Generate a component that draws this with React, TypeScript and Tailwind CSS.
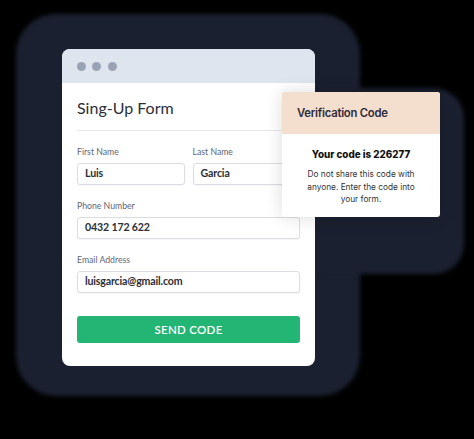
import React from "react";

const formFont = { fontFamily: "Lato, 'Open Sans', sans-serif" } as React.CSSProperties;
const popFont = { fontFamily: "Inter, 'Open Sans', sans-serif" } as React.CSSProperties;

function Field({ label, value }: { label: string; value: string }) {
  return (
    <div className="flex flex-col gap-[5px] min-w-0">
      <div className="text-[8.7px] leading-[12px] text-[#5f6673]">{label}</div>
      <div className="h-[22px] rounded-[3px] border border-[#dadde2] bg-white pl-[7px] flex items-center text-[10.6px] font-bold tracking-[-0.15px] text-[#2b2f38] shadow-[0_1px_1px_rgba(0,0,0,0.04)]">
        {value}
      </div>
    </div>
  );
}

export default function App() {
  return (
    <div className="relative w-[474px] h-[439px] bg-black overflow-hidden" style={formFont}>
      <div className="absolute left-[16px] top-[14px] w-[344px] h-[382px] rounded-[40px] bg-[#1b2030] blur-[2px]" />
      <div className="absolute left-[290px] top-[88px] w-[174px] h-[186px] rounded-[30px] bg-[#1b2030] blur-[2px]" />

      <div className="relative pl-[62px] pt-[49px]">
        <div className="w-[253px] rounded-[8px] bg-white overflow-hidden">
          <div className="h-[34px] bg-[#dfe5ee] flex items-center gap-[6.5px] pl-[14.5px]">
            <span className="w-[9px] h-[9px] rounded-full bg-[#9aa3b4]" />
            <span className="w-[9px] h-[9px] rounded-full bg-[#9aa3b4]" />
            <span className="w-[9px] h-[9px] rounded-full bg-[#9aa3b4]" />
          </div>
          <div className="px-[15px] pt-[15px] pb-[23px] flex flex-col">
            <div className="text-[16px] leading-[20px] text-[#2b2f38]">Sing-Up Form</div>
            <div className="mt-[12px] h-px bg-[#e6e8ec]" />
            <div className="mt-[15px] grid grid-cols-2 gap-[8px]">
              <Field label="First Name" value="Luis" />
              <Field label="Last Name" value="Garcia" />
            </div>
            <div className="mt-[15px]">
              <Field label="Phone Number" value="0432 172 622" />
            </div>
            <div className="mt-[15px]">
              <Field label="Email Address" value="luisgarcia@gmail.com" />
            </div>
            <div className="mt-[23px] h-[27px] rounded-[3px] bg-[#22b573] flex items-center justify-center text-white text-[11.5px] font-semibold tracking-[0.3px]">
              SEND CODE
            </div>
          </div>
        </div>
      </div>

      <div
        className="absolute left-[282px] top-[92px] w-[158px] h-[125px] rounded-[3px] bg-white overflow-hidden shadow-[0_0_18px_rgba(0,0,0,0.14)]"
        style={popFont}
      >
        <div className="h-[42px] bg-[#f4dfcf] flex items-center pl-[15px] text-[11.3px] font-semibold tracking-[-0.25px] text-[#2e2a38]">
          Verification Code
        </div>
        <div className="flex flex-col items-center text-center pt-[14px]">
          <div className="text-[9.8px] leading-[14px] font-extrabold text-[#111]">Your code is 226277</div>
          <div className="mt-[6px] w-[114px] text-[8.3px] leading-[12.5px] text-[#333]">
            Do not share this code with anyone. Enter the code into your form.
          </div>
        </div>
      </div>
    </div>
  );
}
